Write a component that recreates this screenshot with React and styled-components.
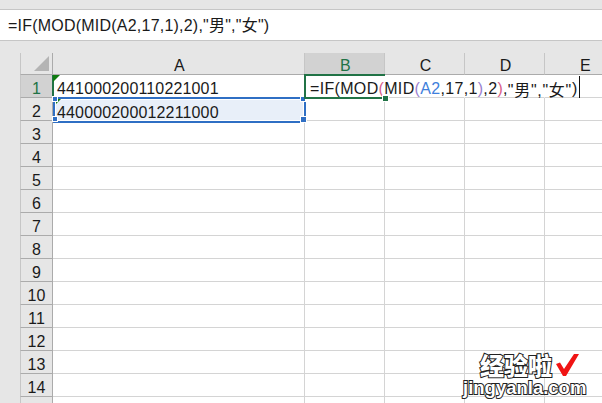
import React from "react";
import styled, { createGlobalStyle } from "styled-components";

const GlobalStyle = createGlobalStyle`
  html, body {
    margin: 0;
    padding: 0;
    background: #e6e6e6;
    overflow: hidden;
  }
`;

const FONT = `"Liberation Sans", "Noto Sans CJK SC", sans-serif`;
const GRID_LINE = "#d4d4d4";
const HEADER_LINE = "#ababab";
const SHEET_GREEN = "#217346";
const SELECT_BLUE = "#2f6fc4";

const Page = styled.div`
  width: 602px;
  height: 403px;
  position: relative;
  overflow: hidden;
  background: #e6e6e6;
  font-family: ${FONT};
  font-size: 16px;
  letter-spacing: 0.15px;
  color: #1a1a1a;
`;

const FormulaBar = styled.div`
  box-sizing: border-box;
  height: 32px;
  margin-top: 9px;
  padding: 0 0 3px 8px;
  display: flex;
  align-items: center;
  letter-spacing: 0.22px;
  background: #fff;
  border-top: 1px solid #c6c6c6;
  border-bottom: 1px solid #c6c6c6;
`;

const SheetArea = styled.div`
  margin: 12px 0 0 20px;
  display: grid;
  grid-template-columns: 33px 252px 80px 80px 80px 80px;
  grid-template-rows: 22px repeat(15, 23px);
`;

const Corner = styled.div`
  position: relative;
  background: #e6e6e6;
  border-left: 1px solid #c6c6c6;
  border-right: 1px solid ${HEADER_LINE};
  border-bottom: 1px solid ${HEADER_LINE};
  &::after {
    content: "";
    position: absolute;
    right: 3px;
    bottom: 3px;
    border-style: solid;
    border-width: 0 0 15px 15px;
    border-color: transparent transparent #b4b4b4 transparent;
  }
`;

const ColHeader = styled.div`
  display: flex;
  align-items: center;
  justify-content: center;
  padding: 4px 0 0 2px;
  box-sizing: border-box;
  background: ${(p) => (p.$active ? "#d2d2d2" : "#e6e6e6")};
  color: ${(p) => (p.$active ? SHEET_GREEN : "#1a1a1a")};
  border-right: 1px solid #c6c6c6;
  border-bottom: 1px solid ${HEADER_LINE};
`;

const RowHeader = styled.div`
  display: flex;
  align-items: center;
  justify-content: center;
  box-sizing: border-box;
  padding-top: 6px;
  background: ${(p) => (p.$active ? "#d2d2d2" : "#e6e6e6")};
  color: ${(p) => (p.$active ? SHEET_GREEN : "#1a1a1a")};
  border-left: 1px solid #c6c6c6;
  border-right: 1px solid ${HEADER_LINE};
  border-bottom: 1px solid ${HEADER_LINE};
`;

const Cell = styled.div`
  position: relative;
  box-sizing: border-box;
  display: flex;
  align-items: center;
  padding: 6px 0 0 4px;
  white-space: nowrap;
  background: #fff;
  border-right: 1px solid ${(p) => (p.$open ? "transparent" : GRID_LINE)};
  border-bottom: 1px solid ${GRID_LINE};
`;

const ErrorMark = styled.span`
  position: absolute;
  left: ${(p) => p.$left}px;
  top: ${(p) => p.$top}px;
  border-style: solid;
  border-width: ${(p) => p.$size}px ${(p) => p.$size}px 0 0;
  border-color: #107c10 transparent transparent transparent;
`;

const LeftTick = styled.span`
  position: absolute;
  left: -1px;
  top: 0;
  bottom: -1px;
  width: 2px;
  background: ${SHEET_GREEN};
`;

const Selection = styled.div`
  position: absolute;
  left: 0;
  top: -1px;
  box-sizing: content-box;
  width: 247px;
  height: 17px;
  display: flex;
  align-items: center;
  padding: 5px 0 0 2px;
  background: #e8eff9;
  border: 2px solid ${SELECT_BLUE};
  outline: 1px solid #fff;
  outline-offset: -3px;
  z-index: 2;
`;

const Handle = styled.span`
  position: absolute;
  width: ${(p) => p.$size}px;
  height: ${(p) => p.$size}px;
  left: ${(p) => p.$x}px;
  top: ${(p) => p.$y}px;
  background: ${SELECT_BLUE};
  border: 1px solid #fff;
`;

const Editor = styled.div`
  position: absolute;
  left: -1px;
  top: -1px;
  box-sizing: border-box;
  width: 81px;
  height: 25px;
  display: flex;
  align-items: center;
  padding: 4px 0 0 4px;
  letter-spacing: 0.33px;
  border-top: 2px solid ${SHEET_GREEN};
  border-bottom: 2px solid ${SHEET_GREEN};
  border-left: 2px solid ${SHEET_GREEN};
  z-index: 3;
`;

const EditorFill = styled.span`
  position: absolute;
  left: 76px;
  top: 19px;
  width: 5px;
  height: 5px;
  background: ${SHEET_GREEN};
  border: 1px solid #fff;
`;

const Ref = styled.span`
  color: ${(p) => p.$color};
`;

const Quoted = styled.span`
  letter-spacing: 0.7px;
`;

const Caret = styled.span`
  display: inline-block;
  flex: none;
  width: 1px;
  height: 22px;
  margin: -4px 0 0 1px;
  background: #111;
`;

const Watermark = styled.div`
  position: absolute;
  left: 463px;
  top: 352px;
  width: 125px;
  display: flex;
  flex-direction: column;
  z-index: 5;
`;

const WatermarkTop = styled.div`
  display: flex;
  align-items: center;
  gap: 4px;
  height: 25px;
  padding-left: 17px;
`;

const WatermarkCn = styled.span`
  font-family: "Noto Sans CJK SC", sans-serif;
  font-weight: 900;
  font-size: 24px;
  letter-spacing: 0;
  line-height: 25px;
  color: #fff;
  -webkit-text-stroke: 2px #222;
  paint-order: stroke fill;
`;

const WatermarkEn = styled.div`
  font-family: "Liberation Sans", sans-serif;
  font-weight: 700;
  font-size: 18.5px;
  letter-spacing: 0;
  line-height: 21px;
  color: #fff;
  -webkit-text-stroke: 2px #222;
  paint-order: stroke fill;
`;

const CheckMark = () => (
  <svg width="24" height="24" viewBox="0 0 24 24">
    <path d="M0 11 L4 9.5 L8 16 L18 1 L23 1 L10 23 L7 23 Z" fill="#f01414" />
  </svg>
);

const COLS = ["A", "B", "C", "D", "E"];
const ROWS = Array.from({ length: 15 }, (_, i) => i + 1);

const App = () => (
  <>
    <GlobalStyle />
    <Page>
      <FormulaBar>=IF(MOD(MID(A2,17,1),2),"男","女")</FormulaBar>
      <SheetArea>
        <Corner />
        {COLS.map((c) => (
          <ColHeader key={c} $active={c === "B"}>
            {c}
          </ColHeader>
        ))}
        {ROWS.map((r) => (
          <React.Fragment key={r}>
            {/* row 15 is only a sliver in the window, its number stays below the edge */}
            <RowHeader $active={r === 1}>{r < 15 ? r : ""}</RowHeader>
            {COLS.map((c) => (
              <Cell key={c} $open={r === 1 && c !== "A"}>
                {c === "A" && r === 1 && (
                  <>
                    <LeftTick />
                    <ErrorMark $left={0} $top={0} $size={7} />
                    441000200110221001
                  </>
                )}
                {c === "A" && r === 2 && (
                  <Selection>
                    <ErrorMark $left={1} $top={0} $size={5} />
                    <Handle $size={4} $x={-3} $y={-3} />
                    <Handle $size={4} $x={-3} $y={17} />
                    <Handle $size={4} $x={245} $y={-3} />
                    <Handle $size={5} $x={245} $y={17} />
                    440000200012211000
                  </Selection>
                )}
                {c === "B" && r === 1 && (
                  <Editor>
                    <EditorFill />
                    =IF(MOD<Ref $color="#d9608a">(</Ref>MID<Ref $color="#9a7fd0">(</Ref>
                    <Ref $color="#3f7fdc">A2</Ref>,17,1<Ref $color="#9a7fd0">)</Ref>,2
                    <Ref $color="#d9608a">)</Ref>,<Quoted>"男","女"</Quoted>)
                    <Caret />
                  </Editor>
                )}
              </Cell>
            ))}
          </React.Fragment>
        ))}
      </SheetArea>
      <Watermark>
        <WatermarkTop>
          <WatermarkCn>经验啦</WatermarkCn>
          <CheckMark />
        </WatermarkTop>
        <WatermarkEn>jingyanla.com</WatermarkEn>
      </Watermark>
    </Page>
  </>
);

export default App;
